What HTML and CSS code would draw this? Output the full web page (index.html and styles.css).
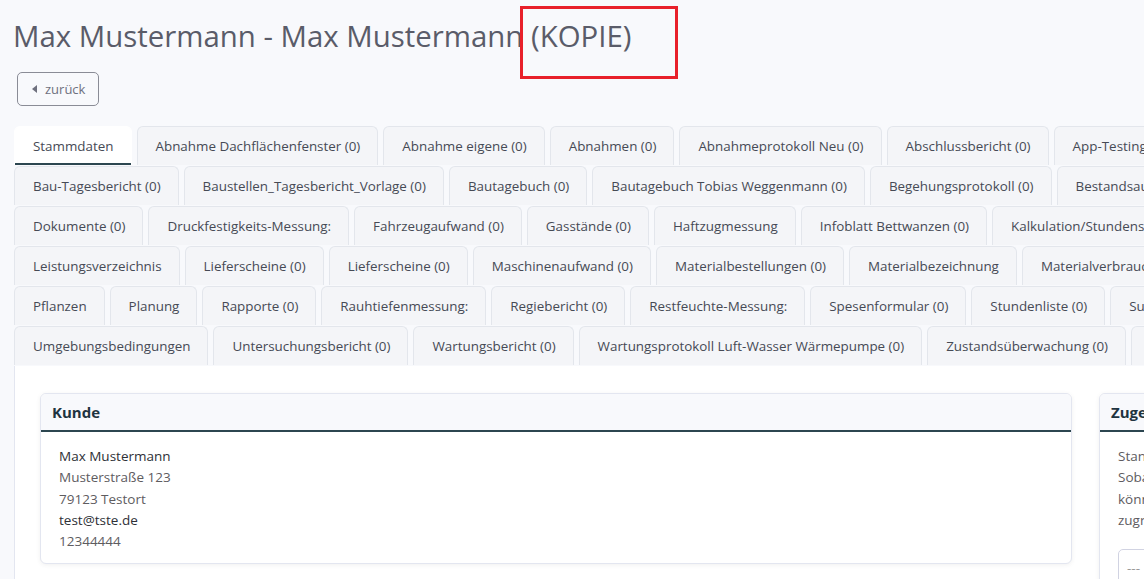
FILE: index.html
```html
<!DOCTYPE html>
<html lang="de">
<head>
    <meta charset="UTF-8">
    <meta name="viewport" content="width=device-width, initial-scale=1.0">
    <title>Max Mustermann - Max Mustermann (KOPIE)</title>
    <link rel="stylesheet" href="styles.css">
</head>
<body>
    <div class="page">
        <h1 class="page-title">Max Mustermann - Max Mustermann (KOPIE)</h1>
        <div class="mark"></div>

        <a class="btn-back" href="#"><span class="caret"></span>zurück</a>

        <div class="tabs">
            <div class="tab-row">
                <a class="tab active" href="#">Stammdaten</a>
                <a class="tab" href="#">Abnahme Dachflächenfenster (0)</a>
                <a class="tab" href="#">Abnahme eigene (0)</a>
                <a class="tab" href="#">Abnahmen (0)</a>
                <a class="tab" href="#">Abnahmeprotokoll Neu (0)</a>
                <a class="tab" href="#">Abschlussbericht (0)</a>
                <a class="tab" href="#">App-Testing (0)</a>
            </div>
            <div class="tab-row">
                <a class="tab" href="#">Bau-Tagesbericht (0)</a>
                <a class="tab" href="#">Baustellen_Tagesbericht_Vorlage (0)</a>
                <a class="tab" href="#">Bautagebuch (0)</a>
                <a class="tab" href="#">Bautagebuch Tobias Weggenmann (0)</a>
                <a class="tab" href="#">Begehungsprotokoll (0)</a>
                <a class="tab" href="#">Bestandsaufnahme (0)</a>
            </div>
            <div class="tab-row">
                <a class="tab" href="#">Dokumente (0)</a>
                <a class="tab" href="#">Druckfestigkeits-Messung:</a>
                <a class="tab" href="#">Fahrzeugaufwand (0)</a>
                <a class="tab" href="#">Gasstände (0)</a>
                <a class="tab" href="#">Haftzugmessung</a>
                <a class="tab" href="#">Infoblatt Bettwanzen (0)</a>
                <a class="tab" href="#">Kalkulation/Stundensatz (0)</a>
            </div>
            <div class="tab-row">
                <a class="tab" href="#">Leistungsverzeichnis</a>
                <a class="tab" href="#">Lieferscheine (0)</a>
                <a class="tab" href="#">Lieferscheine (0)</a>
                <a class="tab" href="#">Maschinenaufwand (0)</a>
                <a class="tab" href="#">Materialbestellungen (0)</a>
                <a class="tab" href="#">Materialbezeichnung</a>
                <a class="tab" href="#">Materialverbrauch (0)</a>
            </div>
            <div class="tab-row">
                <a class="tab" href="#">Pflanzen</a>
                <a class="tab" href="#">Planung</a>
                <a class="tab" href="#">Rapporte (0)</a>
                <a class="tab" href="#">Rauhtiefenmessung:</a>
                <a class="tab" href="#">Regiebericht (0)</a>
                <a class="tab" href="#">Restfeuchte-Messung:</a>
                <a class="tab" href="#">Spesenformular (0)</a>
                <a class="tab" href="#">Stundenliste (0)</a>
                <a class="tab" href="#">Subunternehmer (0)</a>
            </div>
            <div class="tab-row">
                <a class="tab" href="#">Umgebungsbedingungen</a>
                <a class="tab" href="#">Untersuchungsbericht (0)</a>
                <a class="tab" href="#">Wartungsbericht (0)</a>
                <a class="tab" href="#">Wartungsprotokoll Luft-Wasser Wärmepumpe (0)</a>
                <a class="tab" href="#">Zustandsüberwachung (0)</a>
                <a class="tab" href="#">Zwischenbericht (0)</a>
            </div>
        </div>

        <div class="tab-content">
            <div class="card card-main">
                <div class="card-header">Kunde</div>
                <div class="card-body">
                    <div class="strong">Max Mustermann</div>
                    <div>Musterstraße 123</div>
                    <div>79123 Testort</div>
                    <div class="strong">test@tste.de</div>
                    <div>12344444</div>
                </div>
            </div>
            <div class="card card-side">
                <div class="card-header">Zugewiesene Mitarbeiter</div>
                <div class="card-body">
                    <div>Standardmäßig haben alle Mitarbeiter Zugriff.</div>
                    <div>Sobald Mitarbeiter zugewiesen sind,</div>
                    <div>können nur diese auf das Projekt</div>
                    <div>zugreifen.</div>
                    <div class="select">---</div>
                </div>
            </div>
        </div>
    </div>
</body>
</html>
```

FILE: styles.css
```css
html, body {
    overflow: hidden;
}
body {
    margin: 0;
    background-color: #f8f9fc;
    font-family: "Open Sans", "Noto Sans", sans-serif;
    color: #495057;
}
.page {
    position: relative;
    padding: 18px 0 0 14px;
}
.page-title {
    margin: 0 0 0 -1px;
    font-size: 29.4px;
    font-weight: 400;
    line-height: 36px;
    color: #5a5c69;
}
.mark {
    position: absolute;
    left: 520px;
    top: 6px;
    width: 152px;
    height: 67px;
    border: 3px solid #e8202a;
}
.btn-back {
    display: inline-flex;
    align-items: center;
    gap: 8px;
    margin: 18px 0 20px 3px;
    height: 34px;
    padding: 0 13px 0 14px;
    box-sizing: border-box;
    border: 1px solid #8a8c96;
    border-radius: 5px;
    color: #6e707e;
    font-size: 13px;
    text-decoration: none;
}
.caret {
    width: 0;
    height: 0;
    border-top: 4px solid transparent;
    border-bottom: 4px solid transparent;
    border-right: 5px solid #6e707e;
}
.tabs {
    width: 1400px;
}
.tab-row {
    display: flex;
    gap: 5px;
    margin-bottom: 1px;
}
.tab {
    display: block;
    flex: none;
    height: 38px;
    line-height: 38px;
    padding: 0 17px 0 18px;
    border: 1px solid #e3e6ec;
    border-bottom: none;
    border-radius: 6px 6px 0 0;
    background-color: #f4f5f8;
    color: #464a55;
    font-size: 13.4px;
    text-decoration: none;
    white-space: nowrap;
}
.tab.active {
    background-color: #fff;
    border-color: #fff;
    box-shadow: inset 0 -2px 0 #2c4650;
}
.tab-content {
    display: flex;
    align-items: flex-start;
    gap: 27px;
    width: 1300px;
    padding: 27px 25px 20px;
    background-color: #fff;
    border-left: 1px solid #e3e6f0;
}
.card {
    flex: none;
    background-color: #fff;
    border: 1px solid #e3e6f0;
    border-radius: 6px;
    box-shadow: 0 1px 4px rgba(58, 59, 69, 0.08);
    overflow: hidden;
}
.card-main {
    width: 1030px;
}
.card-side {
    width: 300px;
    white-space: nowrap;
}
.card-header {
    height: 36px;
    line-height: 36px;
    padding: 0 11px;
    background-color: #f8f9fc;
    border-bottom: 2px solid #2c4650;
    color: #1f3440;
    font-size: 15px;
    font-weight: 700;
}
.card-body {
    padding: 14px 18px 11px;
    font-size: 13.5px;
    line-height: 21.3px;
    color: #5e5c5f;
}
.card-body .strong {
    color: #2e3036;
}
.select {
    margin-top: 18px;
    height: 36px;
    line-height: 36px;
    padding: 0 8px;
    border: 1px solid #d1d3e2;
    border-radius: 5px;
    color: #999;
}
```
